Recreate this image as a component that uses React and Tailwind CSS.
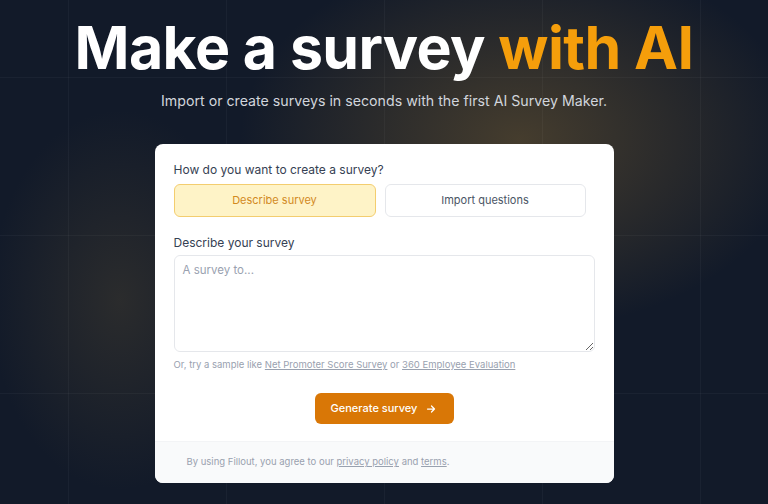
export default function App() {
  return (
    <div
      className="relative h-[504px] w-[768px] overflow-hidden bg-[#121a29] text-gray-900"
      style={{ fontFamily: "Inter, 'Noto Sans', sans-serif" }}
    >
      {/* glow + grid */}
      <div className="pointer-events-none absolute inset-0 bg-[radial-gradient(ellipse_280px_190px_at_520px_140px,rgba(120,95,50,0.5),transparent)]" />
      <div className="pointer-events-none absolute inset-0 bg-[radial-gradient(ellipse_130px_190px_at_120px_300px,rgba(80,70,50,0.4),transparent)]" />
      <div className="pointer-events-none absolute inset-0 bg-[linear-gradient(to_right,rgba(255,255,255,0.035)_1px,transparent_1px),linear-gradient(to_bottom,rgba(255,255,255,0.035)_1px,transparent_1px)] bg-[size:158px_158px] bg-[position:68px_77px]" />

      <div className="relative flex flex-col items-center">
        <h1 className="mt-[12px] text-[59px] font-bold leading-[72px] tracking-[-0.01em] text-white">
          Make a survey <span className="text-[#f59e0b]">with AI</span>
        </h1>
        <p className="mt-[7px] text-[14.2px] leading-5 text-gray-300">
          Import or create surveys in seconds with the first AI Survey Maker.
        </p>

        <div className="mt-[33px] w-[459px] overflow-hidden rounded-lg bg-white">
          <div className="px-[19px] pt-[18px] pb-[17px]">
            <div className="text-[12px] leading-4 text-gray-700">How do you want to create a survey?</div>
            <div className="mt-[6px] flex gap-[9px]">
              <button className="h-[33px] w-[202px] rounded-md border border-[#f3cd6f] bg-[#fef3c7] text-[11px] text-[#d28a1f]">
                Describe survey
              </button>
              <button className="h-[33px] w-[201px] rounded-md border border-gray-200 bg-white text-[11px] text-gray-600">
                Import questions
              </button>
            </div>
            <div className="mt-[18px] text-[12px] leading-4 text-gray-700">Describe your survey</div>
            <textarea
              placeholder="A survey to..."
              className="mt-[4px] block h-[97px] w-full resize-y rounded-md border border-gray-200 px-2 py-1.5 text-[11.5px] placeholder:text-gray-400"
            />
            <div className="mt-[5px] text-[9.5px] leading-4 text-gray-400">
              Or, try a sample like <span className="underline">Net Promoter Score Survey</span> or{" "}
              <span className="underline">360 Employee Evaluation</span>
            </div>
            <div className="mt-[20px] flex justify-center">
              <button className="flex h-[31px] w-[139px] items-center justify-center gap-2 rounded-md bg-[#d97706] text-[11px] font-medium text-white">
                Generate survey
                <svg width="12" height="12" viewBox="0 0 24 24" fill="none" stroke="currentColor" strokeWidth="2.5" strokeLinecap="round" strokeLinejoin="round">
                  <path d="M5 12h14M13 6l6 6-6 6" />
                </svg>
              </button>
            </div>
          </div>
          <div className="flex h-[42px] items-center border-t border-gray-100 bg-gray-50 pl-[32px] text-[9.5px] text-gray-400">
            <span>
              By using Fillout, you agree to our <span className="underline">privacy policy</span> and{" "}
              <span className="underline">terms</span>.
            </span>
          </div>
        </div>
      </div>
    </div>
  );
}
